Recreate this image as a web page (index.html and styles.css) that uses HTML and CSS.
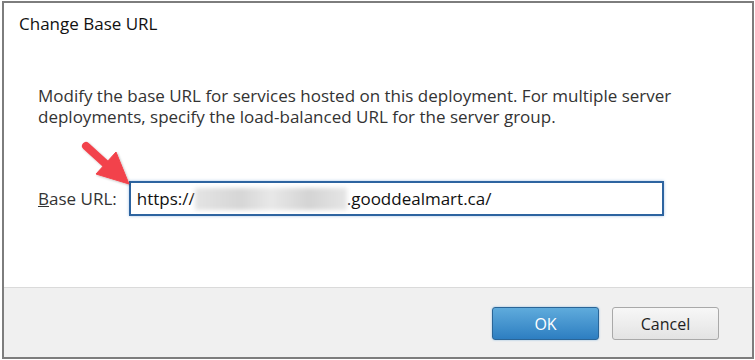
FILE: index.html
```html
<!DOCTYPE html>
<html lang="en">
<head>
  <meta charset="UTF-8" />
  <title>Change Base URL</title>
  <link rel="stylesheet" href="styles.css">
</head>
<body>
  <div class="dialog">
    <div class="dialog-title">Change Base URL</div>
    <div class="dialog-body">
      <p class="intro">Modify the base URL for services hosted on this deployment. For multiple server deployments, specify the load-balanced URL for the server group.</p>
      <div class="field">
        <label class="field-label" for="base-url"><u>B</u>ase URL:</label>
        <div class="url-box" id="base-url">
          <span>https://</span><span class="blurred"></span><span>.gooddealmart.ca/</span>
        </div>
      </div>
    </div>
    <div class="dialog-footer">
      <button class="btn btn-primary">OK</button>
      <button class="btn">Cancel</button>
    </div>
    <svg class="callout" width="60" height="56" viewBox="74 134 60 56">
      <defs>
        <filter id="shade" x="-20%" y="-20%" width="140%" height="140%">
          <feDropShadow dx="1" dy="1" stdDeviation="1" flood-color="#000" flood-opacity="0.25"/>
        </filter>
      </defs>
      <g filter="url(#shade)" fill="#f2434b" stroke="#f2434b">
        <line x1="84" y1="144" x2="106" y2="164" stroke-width="8" stroke-linecap="round"/>
        <polygon points="114,150 94,172 127,182" stroke-width="1" stroke-linejoin="round"/>
      </g>
    </svg>
  </div>
</body>
</html>
```

FILE: styles.css
```css
body {
  margin: 0;
  background: #fff;
  font-family: 'Open Sans', 'Noto Sans', sans-serif;
  color: #1e1e1e;
}
.dialog {
  position: relative;
  margin: 1px 1px 0 2px;
  height: 354px;
  border: 2px solid #7d7d7d;
  display: flex;
  flex-direction: column;
  background: #fff;
}
.dialog-title {
  padding: 10px 0 0 15px;
  font-size: 17px;
  line-height: 21px;
  color: #111;
}
.dialog-body {
  flex: 1;
  padding: 51px 0 0 34px;
}
.intro {
  margin: 0;
  width: 700px;
  font-size: 17px;
  line-height: 21px;
  color: #333;
}
.field {
  display: flex;
  align-items: center;
  margin-top: 54px;
  gap: 12px;
}
.field-label {
  font-size: 17px;
  color: #333;
}
.url-box {
  width: 525px;
  height: 31px;
  border: 2px solid #2d64a0;
  box-shadow: 0 0 3px #a9c6e6;
  display: flex;
  align-items: center;
  padding-left: 6px;
  font-size: 17px;
  color: #111;
  box-sizing: content-box;
}
.blurred {
  display: inline-block;
  width: 152px;
  height: 22px;
  background: linear-gradient(90deg, #e4e4e4, #d6d6d6 30%, #e8e8e8 50%, #d4d4d4 75%, #e6e6e6);
  filter: blur(2px);
}
.dialog-footer {
  height: 70px;
  border-top: 1px solid #dadada;
  background: #f0f0f0;
  display: flex;
  justify-content: flex-end;
  align-items: flex-start;
  gap: 13px;
  padding: 19px 33px 0 0;
  box-sizing: border-box;
}
.btn {
  width: 107px;
  height: 33px;
  border: 1px solid #a9a9a9;
  border-radius: 3px;
  background: linear-gradient(#f7f7f7, #e3e3e3);
  font-family: inherit;
  font-size: 16px;
  color: #1e1e1e;
}
.btn-primary {
  border-color: #2a6597;
  background: linear-gradient(#5fabdc, #2d7ec1);
  color: #fff;
  box-shadow: 0 0 2px #7fb4de;
}
.callout {
  position: absolute;
  left: 72px;
  top: 133px;
}
```
